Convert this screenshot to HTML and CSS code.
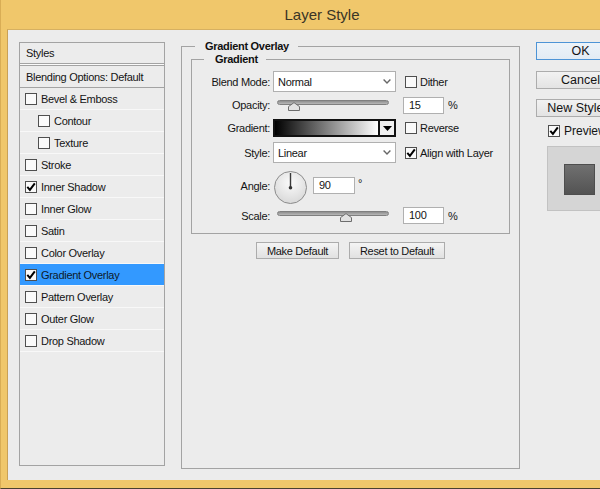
FILE: index.html
```html
<!DOCTYPE html>
<html>
<head>
<meta charset="utf-8">
<title>Layer Style</title>
<link rel="stylesheet" href="styles.css">
</head>
<body>
<div class="window">
  <div class="titlebar">Layer Style</div>
  <div class="client">
    <div class="styles-panel">
      <div class="panel-head">Styles</div>
      <div class="panel-blend">Blending Options: Default</div>
      <ul class="style-list">
        <li class="item"><span class="cb"></span>Bevel &amp; Emboss</li>
        <li class="item sub"><span class="cb"></span>Contour</li>
        <li class="item sub"><span class="cb"></span>Texture</li>
        <li class="item"><span class="cb"></span>Stroke</li>
        <li class="item"><span class="cb"><svg width="10" height="10" viewBox="0 0 10 10"><path d="M1.3 4.8 L3.9 7.8 L8.8 1.4" fill="none" stroke="#000" stroke-width="2"/></svg></span>Inner Shadow</li>
        <li class="item"><span class="cb"></span>Inner Glow</li>
        <li class="item"><span class="cb"></span>Satin</li>
        <li class="item"><span class="cb"></span>Color Overlay</li>
        <li class="item selected"><span class="cb"><svg width="10" height="10" viewBox="0 0 10 10"><path d="M1.3 4.8 L3.9 7.8 L8.8 1.4" fill="none" stroke="#000" stroke-width="2"/></svg></span>Gradient Overlay</li>
        <li class="item"><span class="cb"></span>Pattern Overlay</li>
        <li class="item"><span class="cb"></span>Outer Glow</li>
        <li class="item"><span class="cb"></span>Drop Shadow</li>
      </ul>
    </div>

    <div class="main">
      <fieldset class="group outer">
        <legend>Gradient Overlay</legend>
        <fieldset class="group inner">
          <legend>Gradient</legend>
          <div class="form">
            <div class="lbl">Blend Mode:</div>
            <div class="ctl"><div class="select"><span>Normal</span><svg width="8" height="5" viewBox="0 0 8 5"><path d="M0.6 0.6 L4 4 L7.4 0.6" fill="none" stroke="#666" stroke-width="1.4"/></svg></div></div>
            <div class="aux"><span class="cb"></span>Dither</div>

            <div class="lbl">Opacity:</div>
            <div class="ctl"><div class="slider"><div class="track"></div><svg class="thumb" style="left:11px" width="12" height="9" viewBox="0 0 12 9"><path d="M0.5 8.5 V4.6 L6 0.6 L11.5 4.6 V8.5 Z" fill="#e2e2e2" stroke="#6d6d6d"/></svg></div></div>
            <div class="aux"><div class="num">15</div><span class="unit">%</span></div>

            <div class="lbl">Gradient:</div>
            <div class="ctl"><div class="gradient"><div class="gradient-fill"></div><div class="gradient-btn"><svg width="9" height="5" viewBox="0 0 9 5"><path d="M0 0 H9 L4.5 5 Z" fill="#000"/></svg></div></div></div>
            <div class="aux"><span class="cb"></span>Reverse</div>

            <div class="lbl">Style:</div>
            <div class="ctl"><div class="select"><span>Linear</span><svg width="8" height="5" viewBox="0 0 8 5"><path d="M0.6 0.6 L4 4 L7.4 0.6" fill="none" stroke="#666" stroke-width="1.4"/></svg></div></div>
            <div class="aux"><span class="cb"><svg width="10" height="10" viewBox="0 0 10 10"><path d="M1.3 4.8 L3.9 7.8 L8.8 1.4" fill="none" stroke="#000" stroke-width="2"/></svg></span>Align with Layer</div>

            <div class="lbl">Angle:</div>
            <div class="ctl"><div class="angle">
              <svg class="dial" width="33" height="33" viewBox="0 0 33 33">
                <defs><radialGradient id="dg" cx="50%" cy="35%" r="70%"><stop offset="0" stop-color="#fbfbfb"/><stop offset="1" stop-color="#d6d6d6"/></radialGradient></defs>
                <circle cx="16.5" cy="16.5" r="16" fill="url(#dg)" stroke="#8c8c8c"/>
                <line x1="16.5" y1="2" x2="16.5" y2="16.5" stroke="#3a3a3a" stroke-width="1.4"/>
                <circle cx="16.5" cy="16.8" r="1.8" fill="#333"/>
              </svg>
              <div class="num">90</div><span class="deg">°</span>
            </div></div>
            <div class="aux"></div>

            <div class="lbl">Scale:</div>
            <div class="ctl"><div class="slider"><div class="track"></div><svg class="thumb" style="left:63px" width="12" height="9" viewBox="0 0 12 9"><path d="M0.5 8.5 V4.6 L6 0.6 L11.5 4.6 V8.5 Z" fill="#e2e2e2" stroke="#6d6d6d"/></svg></div></div>
            <div class="aux"><div class="num">100</div><span class="unit">%</span></div>
          </div>
        </fieldset>
        <div class="defaults">
          <button class="small-btn make">Make Default</button>
          <button class="small-btn reset">Reset to Default</button>
        </div>
      </fieldset>
    </div>

    <div class="actions">
      <button class="btn primary">OK</button>
      <button class="btn">Cancel</button>
      <button class="btn">New Style...</button>
      <div class="preview-check"><span class="cb"><svg width="10" height="10" viewBox="0 0 10 10"><path d="M1.3 4.8 L3.9 7.8 L8.8 1.4" fill="none" stroke="#000" stroke-width="2"/></svg></span>Preview</div>
      <div class="preview-box"><div class="preview-swatch"></div></div>
    </div>
  </div>
</div>
</body>
</html>
```

FILE: styles.css
```css
* { box-sizing: border-box; }
html, body { margin: 0; padding: 0; }
body {
  width: 600px;
  height: 489px;
  overflow: hidden;
  background: #f0c76b;
  font-family: "Liberation Sans", Arial, sans-serif;
  font-size: 11px;
  color: #141414;
  letter-spacing: -0.3px;
}
.window {
  width: 644px;
  height: 489px;
  background: #f0c76b;
  display: flex;
  flex-direction: column;
  padding: 0 0 8px 6px;
  border-left: 1px solid #d9ad55;
  border-bottom: 1px solid #4a4030;
}
.titlebar {
  height: 29px;
  flex: none;
  display: flex;
  align-items: center;
  justify-content: center;
  padding-right: 7px;
  font-size: 15px;
  letter-spacing: 0;
  color: #3a3526;
}
.client {
  flex: 1;
  display: flex;
  align-items: flex-start;
  background: #ececec;
  border-top: 1px solid #d6b061;
  border-left: 1px solid #c9a157;
  padding: 10px 0 0 11px;
}

/* left styles panel */
.styles-panel {
  margin-top: 2px;
  width: 146px;
  height: 424px;
  border: 1px solid #a3a3a3;
  flex: none;
}
.panel-head {
  height: 21px;
  padding-left: 6px;
  display: flex;
  align-items: center;
  border-bottom: 1px solid #a3a3a3;
  box-shadow: 0 1px 0 #fafafa;
}
.panel-blend {
  margin-top: 1px;
  height: 23px;
  padding-left: 6px;
  display: flex;
  align-items: center;
  border-top: 1px solid #a3a3a3;
  border-bottom: 1px solid #a3a3a3;
}
.style-list { list-style: none; margin: 0; padding: 0; }
.item {
  height: 22px;
  display: flex;
  align-items: center;
  padding-left: 5px;
  border-bottom: 1px solid #f8f8f8;
}
.item.sub { padding-left: 18px; }
.item.selected { background: #3399ff; color: #0d1a2a; }
.cb {
  width: 12px;
  height: 12px;
  flex: none;
  border: 1px solid #4f4f4f;
  background: #fafafa;
  display: inline-flex;
  align-items: center;
  justify-content: center;
  margin-right: 4px;
}

/* middle */
.main { margin-left: 16px; width: 339px; flex: none; }
.group {
  margin: 0;
  border: 1px solid #a3a3a3;
  min-width: 0;
}
.group > legend {
  font-weight: bold;
  line-height: 13px;
  color: #111;
}
.outer { width: 339px; height: 429px; padding: 0 9px; }
.outer > legend { margin-left: 4px; padding: 0 9px 0 10px; }
.inner { width: 100%; padding: 0 0 8px 0; }
.inner > legend { margin-left: 12px; padding: 0 8px 0 11px; }

.form {
  margin-top: 3px;
  display: grid;
  grid-template-columns: 78px 126px 1fr;
  grid-template-rows: 25px 22px 24px 25px 41px 19px;
  align-items: center;
}
.lbl { text-align: right; }
.ctl { padding-left: 3px; display: flex; align-items: center; }
.aux { padding-left: 7px; display: flex; align-items: center; }
.aux > .cb { margin-left: 2px; margin-right: 3px; }

.select {
  width: 123px;
  height: 21px;
  background: #fff;
  border: 1px solid #b0b0b0;
  display: flex;
  align-items: center;
  justify-content: space-between;
  padding: 0 4px 0 4px;
}
.slider {
  position: relative;
  margin-left: 4px;
  width: 112px;
  height: 11px;
  margin-top: 1px;
}
.track {
  height: 5px;
  border-radius: 3px;
  border: 1px solid #7f7f7f;
  background: linear-gradient(#8e8e8e, #b8b8b8);
}
.thumb { position: absolute; top: 2px; }
.num {
  width: 41px;
  height: 17px;
  background: #fff;
  border: 1px solid #b0b0b0;
  padding-left: 5px;
  line-height: 15px;
}
.unit { margin-left: 4px; }
.gradient {
  width: 123px;
  height: 18px;
  border: 2px solid #111;
  display: flex;
}
.gradient-fill { flex: 1; background: linear-gradient(to right, #000, #fff); }
.gradient-btn {
  width: 16px;
  border-left: 2px solid #111;
  background: #f0f0f0;
  display: flex;
  align-items: center;
  justify-content: center;
}
.angle { display: flex; align-items: center; margin-left: 1px; margin-top: 3px; }
.dial { flex: none; margin-right: 6px; }
.angle .num { width: 42px; margin-top: -3px; }
.deg { margin-left: 3px; margin-top: -9px; }

.defaults {
  display: flex;
  justify-content: center;
  gap: 10px;
  margin-top: 8px;
}
.small-btn {
  height: 17px;
  border: 1px solid #acacac;
  background: linear-gradient(#f4f4f4, #e1e1e1);
  font-family: inherit;
  font-size: 11px;
  letter-spacing: -0.3px;
  color: #141414;
  padding: 0;
}
.make { width: 83px; }
.reset { width: 96px; }

/* right column */
.actions {
  margin-left: 16px;
  margin-top: 2px;
  width: 100px;
  flex: none;
  display: flex;
  flex-direction: column;
}
.btn {
  width: 89px;
  height: 18px;
  border: 1px solid #acacac;
  background: linear-gradient(#f2f2f2, #e3e3e3);
  font-family: inherit;
  font-size: 12.5px;
  letter-spacing: 0;
  color: #141414;
  padding: 0;
  margin-bottom: 10px;
  line-height: 16px;
  white-space: nowrap;
  overflow: hidden;
  text-align: center;
}
.btn.primary {
  border-color: #4d94d6;
  background: linear-gradient(#edf3f9, #e2ebf4);
  margin-bottom: 11px;
}
.preview-check {
  margin-top: -2px;
  height: 12px;
  padding-left: 12px;
  display: flex;
  align-items: center;
  font-size: 12px;
  letter-spacing: 0;
}
.preview-check .cb { margin-right: 4px; }
.preview-box {
  margin-top: 9px;
  margin-left: 11px;
  width: 70px;
  height: 65px;
  background: #d5d5d5;
  border: 1px solid #c2c2c2;
  padding: 17px 0 0 16px;
}
.preview-swatch {
  width: 31px;
  height: 31px;
  border: 1px solid #4e4e4e;
  background: linear-gradient(#707070, #535353);
}
```
